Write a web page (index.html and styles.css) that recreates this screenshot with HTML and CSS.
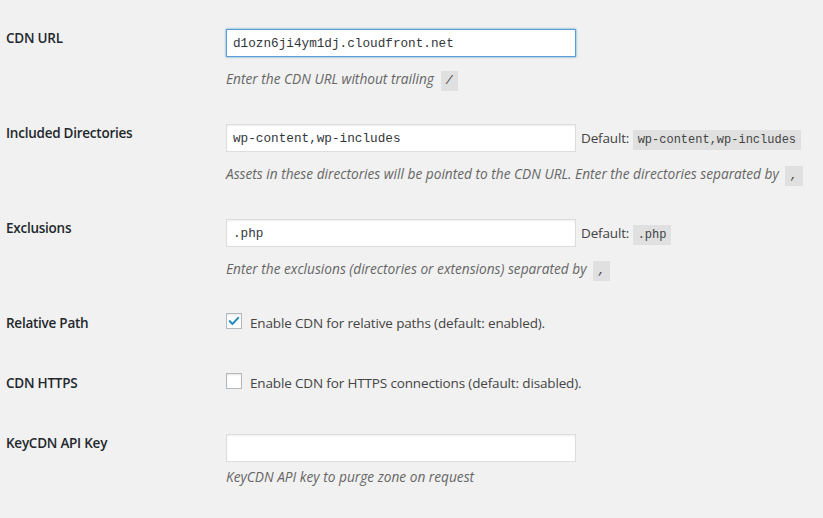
FILE: index.html
```html
<!DOCTYPE html>
<html>
  <head>
    <title>CDN Enabler Settings</title>
    <link rel="stylesheet" href="styles.css">
  </head>

<body>
  <div class="settings">

    <div class="row">
      <div class="label">CDN URL</div>
      <div class="field">
        <input type="text" class="text-input focused" value="d1ozn6ji4ym1dj.cloudfront.net" autofocus>
        <p class="desc desc-code">Enter the CDN URL without trailing <code>/</code></p>
      </div>
    </div>

    <div class="row">
      <div class="label">Included Directories</div>
      <div class="field">
        <div class="input-line">
          <input type="text" class="text-input" value="wp-content,wp-includes">
          <span class="default">Default: <code>wp-content,wp-includes</code></span>
        </div>
        <p class="desc desc-code">Assets in these directories will be pointed to the CDN URL. Enter the directories separated by <code>,</code></p>
      </div>
    </div>

    <div class="row">
      <div class="label">Exclusions</div>
      <div class="field">
        <div class="input-line">
          <input type="text" class="text-input" value=".php">
          <span class="default">Default: <code>.php</code></span>
        </div>
        <p class="desc desc-code">Enter the exclusions (directories or extensions) separated by <code>,</code></p>
      </div>
    </div>

    <div class="row check-row">
      <div class="label">Relative Path</div>
      <div class="field">
        <label class="check-label">
          <span class="checkbox">
            <svg viewBox="0 0 16 16" width="16" height="16"><path d="M3.2 8.2 L6.3 11.3 L12.8 4.4" fill="none" stroke="#1e8cbe" stroke-width="2.4" stroke-linecap="round" stroke-linejoin="round"/></svg>
          </span>
          Enable CDN for relative paths (default: enabled).
        </label>
      </div>
    </div>

    <div class="row check-row">
      <div class="label">CDN HTTPS</div>
      <div class="field">
        <label class="check-label">
          <span class="checkbox"></span>
          Enable CDN for HTTPS connections (default: disabled).
        </label>
      </div>
    </div>

    <div class="row">
      <div class="label">KeyCDN API Key</div>
      <div class="field">
        <input type="text" class="text-input" value="">
        <p class="desc">KeyCDN API key to purge zone on request</p>
      </div>
    </div>

  </div>
</body>
</html>
```

FILE: styles.css
```css
body {
  margin: 0;
  background-color: #f1f1f1;
  color: #444;
  font-family: "Open Sans", sans-serif;
  font-size: 14px;
}

.settings {
  padding: 14px 0 0 6px;
}

.row {
  display: flex;
  padding: 15px 0 20px 0;
}

.check-row {
  height: 25px;
}

.label {
  width: 220px;
  flex-shrink: 0;
  font-weight: 600;
  font-size: 13.5px;
  letter-spacing: -0.25px;
  color: #23282d;
  line-height: 18px;
}

.field {
  display: flex;
  flex-direction: column;
  align-items: flex-start;
}

.input-line {
  display: flex;
  align-items: center;
}

.text-input {
  box-sizing: border-box;
  width: 350px;
  height: 28px;
  margin: 0;
  padding: 0 6px;
  border: 1px solid #ddd;
  box-shadow: inset 0 1px 2px rgba(0, 0, 0, 0.07);
  background-color: #fff;
  color: #32373c;
  font-family: "Liberation Mono", monospace;
  font-size: 12.7px;
  outline: none;
}

.focused {
  border-color: #5b9dd9;
  box-shadow: 0 0 2px rgba(30, 140, 190, 0.8);
}

.default {
  margin-left: 5px;
  font-size: 13.5px;
  letter-spacing: -0.15px;
  color: #444;
}

code {
  background-color: rgba(0, 0, 0, 0.07);
  font-family: "Liberation Mono", monospace;
  font-size: 12px;
  line-height: 12px;
  letter-spacing: 0;
  padding: 3px 5px 3px 5px;
  color: #444;
}

.desc {
  margin: 5px 0 0 0;
  line-height: 20px;
  font-size: 13.7px;
  font-style: italic;
  color: #666;
}

.desc code {
  margin-left: 3px;
}

.desc-code {
  margin-top: 12px;
}

.check-label {
  display: flex;
  align-items: flex-start;
  line-height: 18px;
  font-size: 13.5px;
  letter-spacing: -0.15px;
  color: #444;
}

.checkbox {
  box-sizing: border-box;
  width: 16px;
  height: 16px;
  margin: -1px 8px 0 0;
  border: 1px solid #b4b9be;
  background-color: #fff;
  box-shadow: inset 0 1px 2px rgba(0, 0, 0, 0.1);
  display: flex;
  align-items: center;
  justify-content: center;
}

.checkbox svg {
  display: block;
}
```
